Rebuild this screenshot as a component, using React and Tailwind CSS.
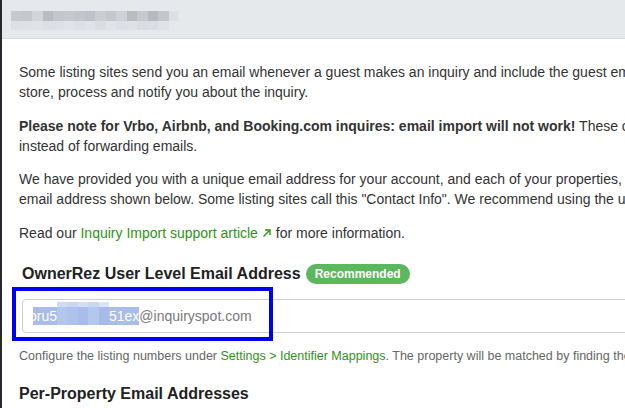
import { useState } from 'react'

// blurred page title blocks (pixelated in the screenshot)
const titleTop = ['#c6c9ce', '#c4c8cc', '#d2d5d9', '#b9bcc0', '#c3c7cd', '#c5c9cd', '#c2c5cb', '#bfc3c9', '#cbcdd1', '#c4c8ce', '#ced1d5', '#b8bcbf', '#c6c9cf', '#b6b9bd', '#c3c7cb', '#dde0e4']
const titleBottom = ['#dde0e4', '#dfe1e5', '#e0e2e6', '#dcdfe3', '#dde0e4', '#e0e3e7', '#dcdfe3', '#dfe2e6', '#dadde1', '#e0e3e7', '#dcdfe3', '#dee1e5', '#d9dce0', '#dadde1', '#dfe2e6', '#e6e9ec']

const blurTop = ['#d0dcf3', '#c9d6f2', '#d3def5', '#cbd7f1', '#dbe4f6']
const blurBottom = ['#b3c6ec', '#aec2eb', '#a9bdea', '#b5c7ed', '#a7bbe9']

function ArrowIcon() {
  return (
    <svg width="10" height="10" viewBox="0 0 10 10" className="inline-block ml-[4px] mb-[2px]" fill="none" stroke="currentColor" strokeWidth="1.4">
      <path d="M1.5 8.5 L8 2" />
      <path d="M3 2 H8 V7" />
    </svg>
  )
}

export default function App() {
  const [email] = useState('@inquiryspot.com')

  return (
    <div className="flex w-[625px] h-[408px] overflow-hidden bg-white font-['Liberation_Sans',Arial,sans-serif]">
      {/* borda escura da lateral */}
      <div className="w-[2px] shrink-0 bg-[#25292d]" />

      <div className="flex-1 min-w-0">
        {/* --- CABEÇALHO (título borrado) --- */}
        <header className="h-[39px] bg-[#e6e9ec] border-b border-[#d8dbde] pl-[9px] pt-[11px]">
          <div className="flex">
            {titleTop.map((c, i) => (
              <div key={i} className="w-[10.5px] h-[10px]" style={{ backgroundColor: c }} />
            ))}
          </div>
          <div className="flex">
            {titleBottom.map((c, i) => (
              <div key={i} className="w-[10.5px] h-[9px]" style={{ backgroundColor: c }} />
            ))}
          </div>
        </header>

        {/* --- CONTEÚDO --- */}
        <main className="w-[1100px] pl-[17px] pt-[23px] text-[14px] leading-[20px] text-[#333]">
          <p className="mb-[13.5px]">
            Some listing sites send you an email whenever a guest makes an inquiry and include the guest email address so that OwnerRez can
            <br />
            store, process and notify you about the inquiry.
          </p>
          <p className="mb-[13.5px]">
            <b>Please note for Vrbo, Airbnb, and Booking.com inquires: email import will not work!</b> These channels must be connected via API
            <br />
            instead of forwarding emails.
          </p>
          <p className="mb-[13.5px]">
            We have provided you with a unique email address for your account, and each of your properties, that you can use as the contact
            <br />
            email address shown below. Some listing sites call this "Contact Info". We recommend using the user level address.
          </p>
          <p>
            Read our <a className="text-[#2f9317]">Inquiry Import support article<ArrowIcon /></a> for more information.
          </p>

          {/* Endereço de email do usuário */}
          <div className="flex items-center h-[22px] mt-[20px] pl-[3px]">
            <h3 className="text-[16px] font-bold text-[#222]">OwnerRez User Level Email Address</h3>
            <span className="ml-[5px] h-[20px] px-[9px] rounded-full bg-[#5cb85c] text-white text-[12px] font-bold leading-[20px]">
              Recommended
            </span>
          </div>

          <div className="relative ml-[3px] mt-[14px]">
            <div className="h-[34px] w-[900px] border border-[#d0d0d0] rounded-[4px] pl-[10px] flex items-center text-[14px] text-[#7a7a7a]">
              <span className="flex items-center h-[18px] bg-[#a8bdea] text-white">
                <span className="flex justify-end w-[24px] overflow-hidden">oru5</span>
                <span className="flex flex-col h-[23px] -mt-[5px] w-[52px]">
                  <span className="flex h-[5px]">
                    {blurTop.map((c, i) => (
                      <span key={i} className="flex-1" style={{ backgroundColor: c }} />
                    ))}
                  </span>
                  <span className="flex flex-1">
                    {blurBottom.map((c, i) => (
                      <span key={i} className="flex-1" style={{ backgroundColor: c }} />
                    ))}
                  </span>
                </span>
                <span>51ex</span>
              </span>
              <span>{email}</span>
            </div>
            {/* marcação azul da captura */}
            <div className="absolute left-[-10px] top-[-12px] w-[261px] h-[54px] border-4 border-[#0000f5]" />
          </div>

          <p className="mt-[15px] text-[12.5px] leading-[17px] text-[#666]">
            Configure the listing numbers under <a className="text-[#2f9317]">Settings &gt; Identifier Mappings</a>. The property will be matched by finding the listing number in the email.
          </p>

          <h3 className="mt-[19px] text-[16px] font-bold text-[#222]">Per-Property Email Addresses</h3>
        </main>
      </div>
    </div>
  )
}
